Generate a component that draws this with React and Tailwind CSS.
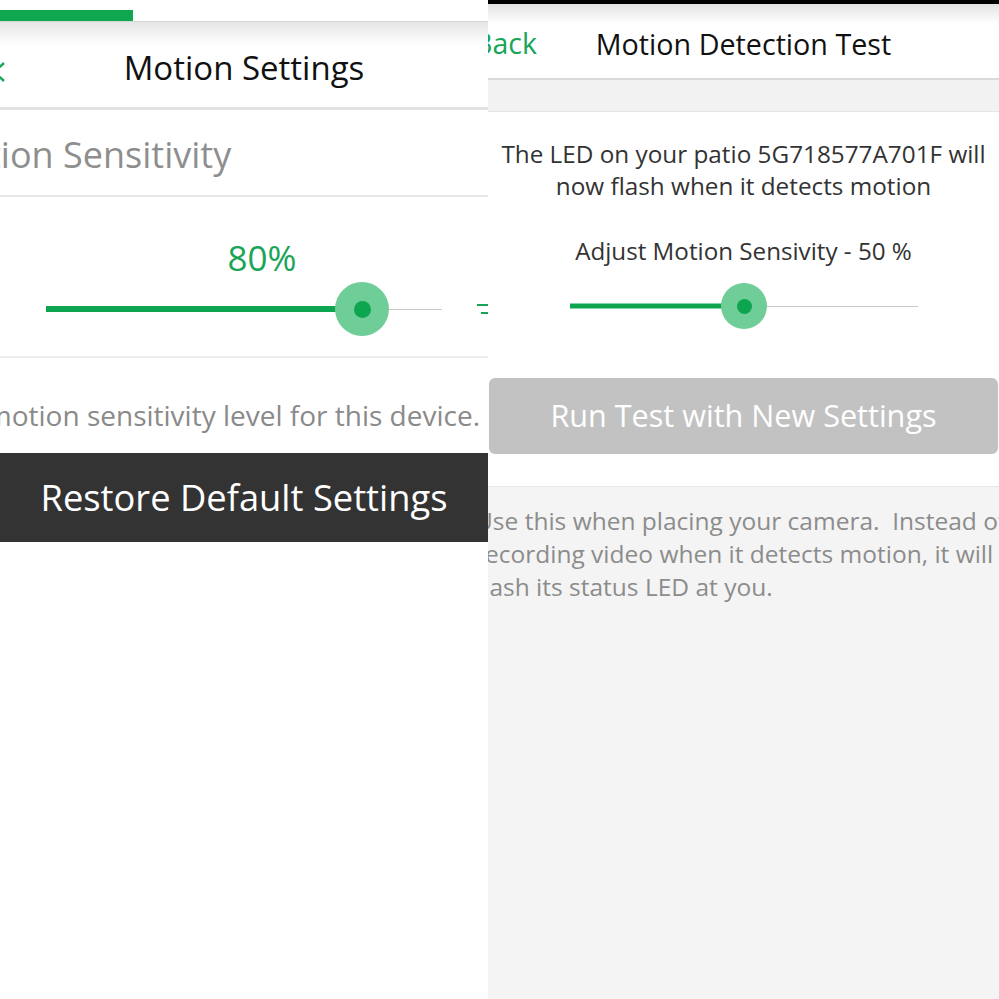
import React from "react";

const font = { fontFamily: '"Open Sans", "Noto Sans", sans-serif' };

function Slider({ width, filled, bar, halo, dot }) {
    return (
        <div className="relative shrink-0" style={{ width, height: halo }}>
            <div className="absolute left-0 right-0 top-1/2 h-px bg-[#c9c9c9]" />
            <div
                className="absolute left-0 top-1/2 -translate-y-1/2 bg-[#0ea550]"
                style={{ width: filled, height: bar }}
            />
            <div
                className="absolute top-0 -translate-x-1/2 rounded-full bg-[#6fcd97] flex items-center justify-center"
                style={{ left: filled, width: halo, height: halo }}
            >
                <div className="rounded-full bg-[#0ea550]" style={{ width: dot, height: dot }} />
            </div>
        </div>
    );
}

function MotionSettings() {
    return (
        <div className="w-[488px] shrink-0 overflow-hidden bg-white flex flex-col">
            <div className="pt-[10px]">
                <div className="h-[11px] w-[133px] bg-[#0fa851]" />
            </div>
            <div className="h-px bg-[#d4d4d4]" />
            <div className="h-[88px] flex items-center justify-center pt-[6px] relative bg-[linear-gradient(to_bottom,#e6e6e6,#ffffff_24px)] border-b-[3px] border-[#e2e2e2]">
                <svg className="absolute left-[-9px] top-[39px]" width="16" height="22" viewBox="0 0 16 22">
                    <path d="M13 2 L3 11 L13 20" fill="none" stroke="#18a558" strokeWidth="2.5" />
                </svg>
                <span className="text-[33px] text-[#111]" style={font}>Motion Settings</span>
            </div>

            <div className="h-[87px] flex items-center border-b-2 border-[#e8e8e8] pt-[4px]">
                <span className="ml-[-66px] whitespace-nowrap text-[36px] text-[#8e8e8e]" style={font}>
                    Motion Sensitivity
                </span>
            </div>

            <div className="h-[161px] flex flex-col border-b-2 border-[#ececec]">
                <div className="pt-[43px] pl-[36px] flex justify-center">
                    <span className="text-[35px] leading-[35px] text-[#18a558]" style={font}>80%</span>
                </div>
                <div className="mt-[7px] flex items-center">
                    <div className="ml-[46px]">
                        <Slider width={396} filled={316} bar={6} halo={54} dot={17} />
                    </div>
                    <svg className="ml-[35px] shrink-0" width="14" height="12" viewBox="0 0 14 12">
                        <rect x="0" y="1" width="14" height="2" fill="#18a558" />
                        <rect x="4" y="9" width="10" height="2" fill="#18a558" />
                    </svg>
                </div>
            </div>

            <div className="h-[95px] flex justify-end pr-[8px] pt-[38px] overflow-hidden">
                <span className="whitespace-nowrap text-[28px] leading-[38px] text-[#8a8a8a]" style={font}>
                    the motion sensitivity level for this device.
                </span>
            </div>

            <button className="h-[89px] w-full bg-[#333333] flex items-center justify-center">
                <span className="text-[36.3px] text-white" style={font}>Restore Default Settings</span>
            </button>
        </div>
    );
}

function MotionTest() {
    return (
        <div className="flex-1 min-w-0 overflow-hidden bg-[#f4f4f4] flex flex-col" style={font}>
            <div className="h-[4px] bg-black" />
            <div className="h-[74px] grid grid-cols-[1fr_auto_1fr] items-center pt-[5px] bg-[linear-gradient(to_bottom,#e2e2e2,#ffffff_20px)]">
                <span className="ml-[-14px] text-[28.5px] text-[#18a558]">Back</span>
                <span className="text-[28.7px] text-[#111]">Motion Detection Test</span>
                <span />
            </div>
            <div className="h-[2px] bg-[#dadada]" />
            <div className="h-[32px] bg-[#f2f2f2] border-b border-[#e4e4e4]" />

            <div className="bg-white flex flex-col items-center pt-[26px] pb-[32px] border-b border-[#e6e6e6]">
                <p className="text-center text-[24.3px] leading-[32px] text-[#333]">
                    The LED on your patio 5G718577A701F will
                    <br />
                    now flash when it detects motion
                </p>
                <p className="mt-[33px] text-[24.2px] leading-[32px] text-[#333]">Adjust Motion Sensivity - 50 %</p>
                <div className="mt-[16px] self-start ml-[82px]">
                    <Slider width={348} filled={174} bar={5} halo={46} dot={15} />
                </div>
                <button className="mt-[49px] self-stretch mx-[1px] h-[76px] rounded-[6px] bg-[#c2c2c2] flex items-center justify-center">
                    <span className="text-[30.6px] text-white">Run Test with New Settings</span>
                </button>
            </div>

            <div className="pt-[17px] ml-[-13px] text-[24.5px] leading-[33px] text-[#8c8c8c] whitespace-pre">
                <div>Use this when placing your camera.  Instead of</div>
                <div>recording video when it detects motion, it will</div>
                <div>flash its status LED at you.</div>
            </div>
        </div>
    );
}

export default function App() {
    return (
        <div className="w-[999px] h-[999px] flex overflow-hidden bg-white">
            <MotionSettings />
            <MotionTest />
        </div>
    );
}
